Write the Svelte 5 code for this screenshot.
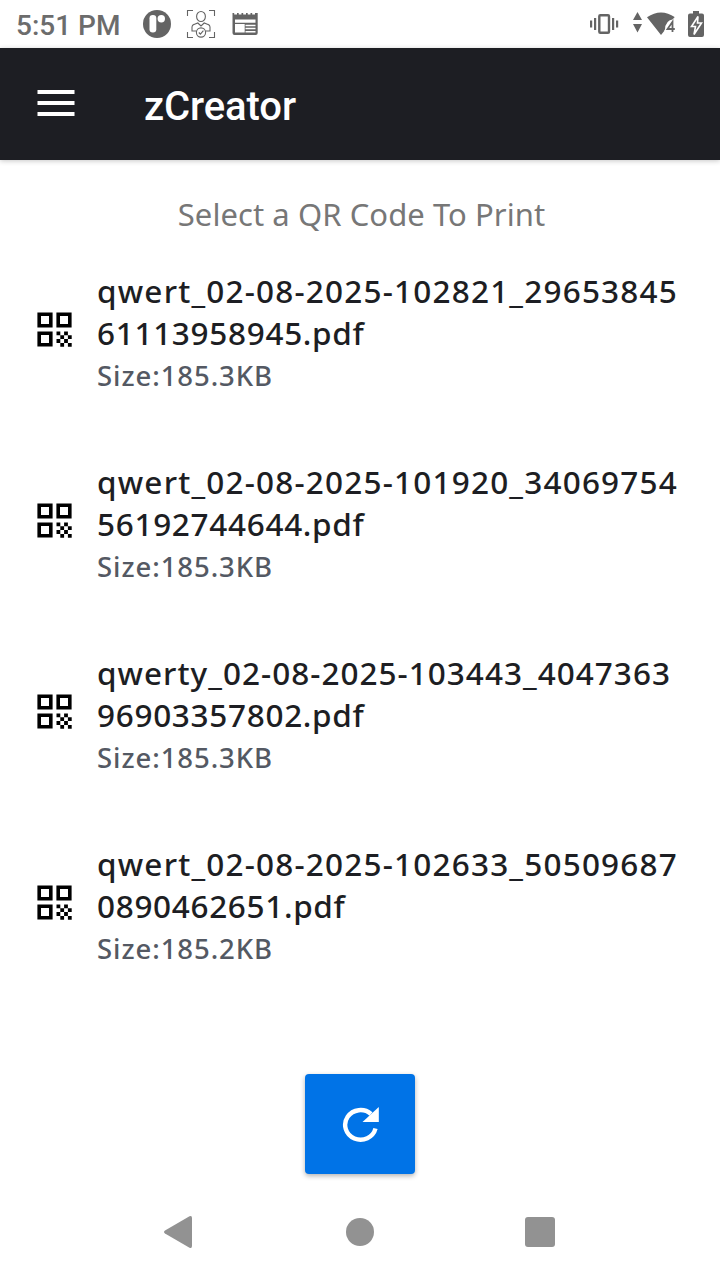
<script>
  const files = [
    { lines: [['qwert_02-08-2025-102821_29653845', 581], ['61113958945.pdf', 267.5]], size: 'Size:185.3KB' },
    { lines: [['qwert_02-08-2025-101920_34069754', 581], ['56192744644.pdf', 267.5]], size: 'Size:185.3KB' },
    { lines: [['qwerty_02-08-2025-103443_4047363', 574], ['96903357802.pdf', 267.5]], size: 'Size:185.3KB' },
    { lines: [['qwert_02-08-2025-102633_50509687', 581], ['0890462651.pdf', 248.5]], size: 'Size:185.2KB' }
  ];

  // Spreads the letters of a line evenly over the given width.
  function track(node, width) {
    const natural = node.getBoundingClientRect().width;
    node.style.letterSpacing = `${(width - natural) / node.textContent.length}px`;
  }
</script>

<div class="screen">
  <div class="status">
    <span class="time"><span use:track={104.5}>5:51 PM</span></span>
    <svg class="notifications" width="118" height="48" viewBox="142 0 118 48" fill="#646464">
      <circle cx="157" cy="24" r="14" />
      <rect x="149.5" y="15" width="6.8" height="17.5" rx="3.3" fill="#fff" />
      <circle cx="161.3" cy="18.7" r="3.7" fill="#fff" />
      <g fill="none" stroke="#646464" stroke-width="1.1">
        <path d="M187.500 16v-5.500h5.500M209 10.500h5.500v5.500M187.500 32v5.500h5.500M209 37.500h5.500v-5.500" />
        <ellipse cx="201" cy="16.500" rx="4.400" ry="5" />
        <path d="M196 31h-4v-4q0-2 2-2.600l3.800-1.400 3.200 3 3.200-3 3.800 1.400q2 .6 2 2.600v4h-4" />
        <circle cx="201" cy="32.500" r="4.600" fill="#fff" />
        <path d="M198.800 32.500l1.600 1.700 3-3.500" />
      </g>
      <path fill-rule="evenodd" d="M232.500 13h1.700v1.500h2.800v-1.500h1.700v1.500h2.800v-1.500h1.700v1.500h2.800v-1.500h1.700v1.500h2.800v-1.500h1.700v1.500h2.800v-1.500h2.700v20q0 2-2 2h-21.200q-2 0-2-2zM235 19.500v3.200h20.500v-3.200zM235 24v8.500h9.700v-8.500z" />
      <path d="M245.500 25.500h10M245.500 28.500h10M245.500 31.700h10" stroke="#fff" stroke-width="1.400" />
    </svg>
    <svg class="system" width="118" height="48" viewBox="588 0 118 48" fill="#646464">
      <path d="M590 20.500h2.200v7h-2.200zM594 18h2.200v12h-2.200zM612 18h2.200v12h-2.200zM616 20.500h2.200v7h-2.200z" />
      <rect x="599.300" y="15.300" width="9.700" height="17.400" rx="1" fill="none" stroke="#646464" stroke-width="2.400" />
      <path d="M637.500 12l4.500 8h-9zM637.500 32.500l4.500-8.500h-9z" />
      <path d="M647 17.300q14-9.500 28 0l-1.500 2q-8.500 1-8.500 10.700L661 35z" />
      <path d="M673.200 32v-10.500l-6 7.700h8" fill="none" stroke="#fff" stroke-width="3.200" />
      <path d="M672.500 32v-10.200l-5 7.200h7.300" fill="none" stroke="#646464" stroke-width="1.800" />
      <path d="M693 11h6v2.500h3q2 0 2 2v19.500q0 2-2 2h-12q-2 0-2-2v-19.500q0-2 2-2h3z" />
      <path d="M698 16.500l-6.500 10h4l-1.500 8 7.500-11.500h-4z" fill="#646464" stroke="#fff" stroke-width="1.600" />
    </svg>
  </div>

  <header>
    <svg width="38" height="26" viewBox="0 0 38 26" fill="#fff">
      <path d="M.5 0h37v4H.5zM.5 11h37v4H.5zM.5 22h37v4H.5z" />
    </svg>
    <h1><span use:track={152}>zCreator</span></h1>
  </header>

  <main>
    <h2><span use:track={367.5}>Select a QR Code To Print</span></h2>
    <ul>
      {#each files as file}
        <li>
          <svg class="qr" width="36" height="36" viewBox="0 0 36 36">
            <path d="M2.200 2.200h11.600v11.600H2.200zM21.200 2.200h11.600v11.600H21.200zM2.200 21.200h11.600v11.600H2.200z" fill="none" stroke="#000" stroke-width="3.600" />
            <path d="M19.500 19.500h3.800v3.800h-3.800zM27.100 19.500h3.800v3.800h-3.800zM23.300 23.300h3.800v3.800h-3.800zM30.900 23.300h3.800v3.800h-3.800zM19.500 27.100h3.800v3.800h-3.800zM27.100 27.100h3.800v3.800h-3.800zM23.300 30.900h3.800v3.800h-3.800zM30.900 30.900h3.800v3.800h-3.800z" fill="#000" />
          </svg>
          <div>
            {#each file.lines as [text, width]}
              <div class="name"><span use:track={width}>{text}</span></div>
            {/each}
            <div class="size"><span use:track={176}>{file.size}</span></div>
          </div>
        </li>
      {/each}
    </ul>
    <button aria-label="Refresh">
      <svg width="40" height="38" viewBox="0 0 40 38">
        <path d="M35.500 23.500A15.400 14.800 0 1 1 31 9" fill="none" stroke="#fff" stroke-width="4.400" />
        <path d="M38.800 2v15h-16.300z" fill="#fff" />
      </svg>
    </button>
  </main>

  <nav>
    <svg width="30" height="34" viewBox="0 0 30 34"><path d="M1 15.500L25.500 1.300Q28 .3 28 3v28q0 2.700-2.500 1.700L1 18.500q-2-1.500 0-3z" fill="#929292" /></svg>
    <span class="home"></span>
    <span class="recent"></span>
  </nav>
</div>

<style>
  :global(body) { margin: 0; background: #fff; }
  .screen { width: 720px; height: 1280px; display: flex; flex-direction: column; background: #fff; overflow: hidden; font-family: "Noto Sans", sans-serif; }
  .status { height: 48px; display: flex; padding: 0 14px 0 16px; box-sizing: border-box; flex: none; }
  .time { width: 126px; font: 500 28px/52px Roboto, sans-serif; color: #6c6c6c; white-space: nowrap; }
  .system { margin-left: auto; }
  header { height: 112px; flex: none; display: flex; align-items: center; gap: 69px; padding-left: 37px; box-sizing: border-box; background: #1d1e23; box-shadow: 0 1px 5px rgba(0, 0, 0, .22); }
  header svg { margin-bottom: 2px; }
  h1 { margin: 6px 0 0; font: 500 40px/48px Roboto, sans-serif; color: #fff; white-space: nowrap; }
  main { flex: 1; display: flex; flex-direction: column; align-items: center; }
  h2 { margin: 33px 0 0 3px; font-size: 31px; line-height: 42px; font-weight: 400; color: #777; white-space: nowrap; }
  ul { list-style: none; margin: 35px 0 0; padding: 0 0 0 37px; width: 720px; box-sizing: border-box; }
  li { height: 191px; display: flex; gap: 24px; align-items: flex-start; }
  .qr { margin-top: 42px; flex: none; }
  .name { height: 42px; font-size: 31.5px; line-height: 42px; font-weight: 480; color: #1d1e23; white-space: nowrap; }
  .size { height: 42px; font-size: 27.5px; line-height: 44px; font-weight: 480; color: #545963; white-space: nowrap; }
  button { width: 110px; height: 100px; margin-top: 40px; padding: 0; border: 0; border-radius: 4px; background: #0073e7; display: grid; place-items: center; box-shadow: 0 2px 5px rgba(0, 0, 0, .3); }
  nav { height: 96px; flex: none; display: flex; align-items: center; padding: 0 165px 0 164px; justify-content: space-between; }
  .home { width: 28px; height: 28px; border-radius: 50%; background: #929292; }
  .recent { width: 30px; height: 30px; border-radius: 3px; background: #929292; }
</style>
